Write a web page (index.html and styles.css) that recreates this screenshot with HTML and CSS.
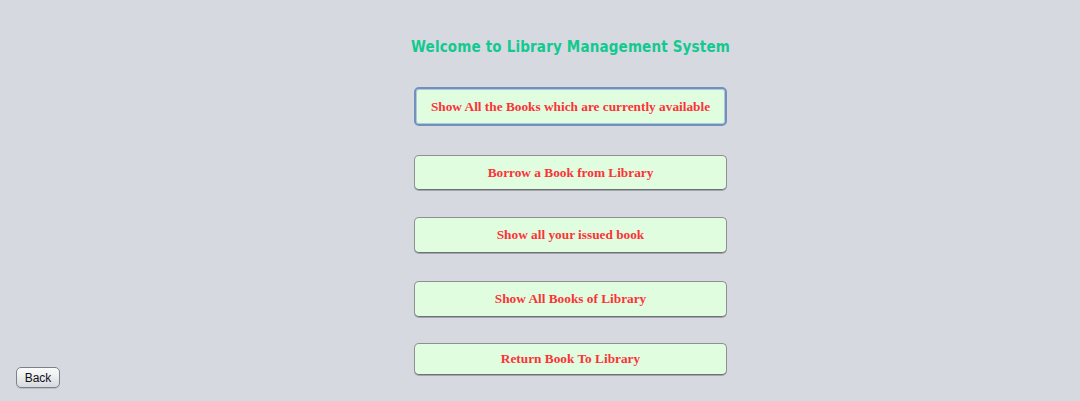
FILE: index.html
```html
<!DOCTYPE html>
<html>
<head>
<meta charset="utf-8">
<link rel="stylesheet" href="styles.css">
</head>
<body>
<div class="page">
  <div class="side">
    <button class="back">Back</button>
  </div>
  <div class="main">
    <h1 class="title">Welcome to Library Management System</h1>
    <button class="menu b1 focused">Show All the Books which are currently available</button>
    <button class="menu b2">Borrow a Book from Library</button>
    <button class="menu b3">Show all your issued book</button>
    <button class="menu b4">Show All Books of Library</button>
    <button class="menu b5">Return Book To Library</button>
  </div>
</div>
</body>
</html>
```
FILE: styles.css
```css
html, body {
  margin: 0;
  padding: 0;
  background: #d6d9e0;
}
.page {
  width: 1080px;
  height: 401px;
  display: flex;
  overflow: hidden;
}
.side {
  width: 414px;
  box-sizing: border-box;
  padding: 0 0 13px 16px;
  display: flex;
  align-items: flex-end;
}
.back {
  width: 44px;
  height: 21px;
  padding: 0;
  margin: 0;
  border: 1px solid #7e8186;
  border-radius: 5px;
  background: linear-gradient(#fbfbfc 0%, #eceef1 45%, #d6d9de 100%);
  font-family: "Liberation Sans", Arial, sans-serif;
  font-size: 12px;
  color: #111;
  box-shadow: 0 1px 0 rgba(0,0,0,0.12);
}
.main {
  width: 313px;
  display: flex;
  flex-direction: column;
  align-items: center;
  padding-top: 37px;
}
.title {
  margin: 0;
  height: 20px;
  line-height: 20px;
  white-space: nowrap;
  font-family: "DejaVu Sans Condensed", "DejaVu Sans", Tahoma, sans-serif;
  font-stretch: condensed;
  font-weight: bold;
  font-size: 15px;
  letter-spacing: 0.17px;
  color: #12c98f;
}
.menu {
  width: 313px;
  margin: 0;
  padding: 0;
  box-sizing: border-box;
  border: 1px solid #8d8f93;
  border-bottom-color: #6f7175;
  border-radius: 5px;
  background: #e0fde0;
  box-shadow: 0 1px 0 rgba(70,70,80,0.35);
  font-family: "Liberation Serif", "Times New Roman", serif;
  font-weight: bold;
  font-size: 13.3px;
  letter-spacing: 0;
  color: #fb3338;
}
.menu.focused {
  border: 2px solid #7291ba;
  box-shadow: inset 0 0 0 1px #b4c6de;
}
.b1 { margin-top: 30px; height: 39px; }
.b2 { margin-top: 29px; height: 35px; }
.b3 { margin-top: 27px; height: 36px; }
.b4 { margin-top: 28px; height: 36px; }
.b5 { margin-top: 26px; height: 32px; }
```
